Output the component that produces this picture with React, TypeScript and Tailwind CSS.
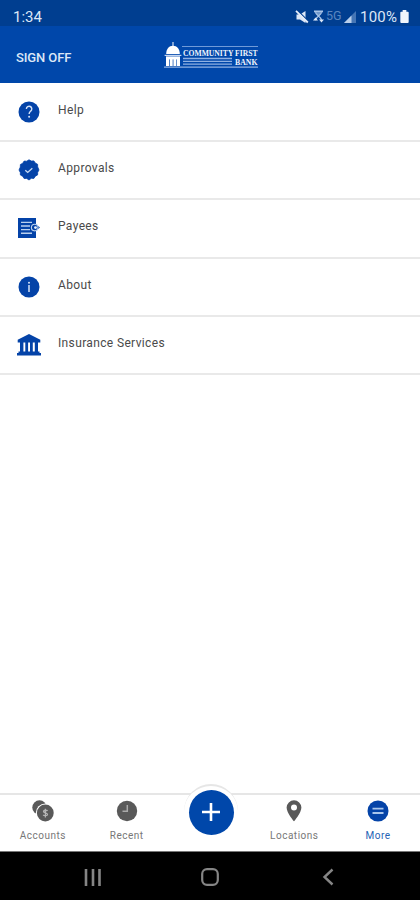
import React from "react";

const HelpIcon = () => (
  <svg width="22" height="22" viewBox="0 0 22 22">
    <circle cx="11" cy="11" r="10.5" fill="#0443a8" />
    <path d="M8.4 8a2.7 2.7 0 1 1 4.3 2.1c-1 .9-1.6 1.5-1.6 2.9" fill="none" stroke="#d5e2f7" strokeWidth="1.4" />
    <circle cx="11.1" cy="15.7" r="1" fill="#d5e2f7" />
  </svg>
);

const ApprovalsIcon = () => (
  <svg width="22" height="22" viewBox="0 0 22 22">
    <path
      d="M11 .8l2.3 1.2 2.6-.1 1.4 2.2 2.3 1.2.1 2.6L21 11l-1.300 2.300-.1 2.600-2.300 1.300-1.400 2.200-2.600-.1L11 21l-2.300-1.600-2.600.1-1.400-2.200-2.300-1.300-.1-2.600L1 11l1.300-2.900.1-2.600 2.300-1.200 1.400-2.200 2.600.1z"
      fill="#0443a8"
      stroke="#0443a8"
      strokeWidth="0.8"
      strokeLinejoin="round"
    />
    <path d="M7.3 11.2l2.4 2.2 4.6-4.2" fill="none" stroke="#c4d8f2" strokeWidth="1.4" />
  </svg>
);

const PayeesIcon = () => (
  <svg width="22" height="22" viewBox="0 0 22 22">
    <path d="M0 1h18v20H0z" fill="#0443a8" />
    <path d="M3 5.4h11M3 9h9M3 12.6h9M3 16.2h11" stroke="#b9d0ee" strokeWidth="1.4" />
    <path d="M16 5.8l6 4.8-6 5z" fill="#0443a8" />
    <circle cx="16.7" cy="10.6" r="3.3" fill="#0443a8" stroke="#b9d0ee" strokeWidth="1.1" />
    <circle cx="17.5" cy="10.6" r="1.4" fill="#e8f0fb" />
  </svg>
);

const AboutIcon = () => (
  <svg width="22" height="22" viewBox="0 0 22 22">
    <circle cx="11" cy="11" r="10.5" fill="#0443a8" />
    <path d="M11 9v7" stroke="#d5e2f7" strokeWidth="1.5" />
    <circle cx="11" cy="6.7" r="1" fill="#d5e2f7" />
  </svg>
);

const InsuranceIcon = () => (
  <svg width="24" height="22" viewBox="0 0 24 22" fill="#0443a8">
    <path d="M12 0l11.3 5.8V8.6H.7V5.8zM3 8.6h3.4V18H3zM8.3 8.6h2.8V18H8.3zM13 8.6h2.8V18H13zM17.8 8.6H21V18h-3.2zM1.5 17.4h21v1.8h-21zM0 19h24v2.6H0z" />
  </svg>
);

const BankLogo = () => (
  <svg width="96" height="28" viewBox="0 0 96 28">
    <g fill="#fff">
      <path d="M8.5 1h1v5h-1z" />
      <path d="M2.2 13C2.200 8 5 4.800 9 4.800s6.800 3.200 6.800 8.200z" />
      <path d="M.6 13.8h16.800v1.200H.6z" fill="#c6d7f1" />
      <path d="M2 15.4h14v3H2z" />
      <path d="M2 16h3v9H2zM5.700 16h3v9h-3zM9.400 16h3v9h-3zM13 16h3v9h-3z" />
    </g>
    <path d="M0 26.2h94" stroke="#8fb1e2" strokeWidth="1.2" />
    <path d="M18 5.5h76" stroke="#6f9ad8" strokeWidth="1" />
    <path d="M19 17.5h49M19 20.3h49M19 23.1h49" stroke="#8fb1e2" strokeWidth="1.3" />
    <text x="19" y="14.6" fill="#f0f5fc" fontSize="7.8" fontWeight="700" fontFamily="Liberation Serif, serif" textLength="74.5" lengthAdjust="spacingAndGlyphs">
      COMMUNITY FIRST
    </text>
    <text x="71" y="23.7" fill="#f0f5fc" fontSize="7.6" fontWeight="700" fontFamily="Liberation Serif, serif" textLength="22.5" lengthAdjust="spacingAndGlyphs">
      BANK
    </text>
  </svg>
);

const StatusBar = () => (
  <div className="flex h-[26px] items-center bg-[#003e90] pt-[7px] pr-[11px] pl-[13px] text-[#dce7f7]">
    <span className="mt-px text-[15px] leading-none">1:34</span>
    <div className="ml-auto flex items-center">
      <svg width="14" height="14" viewBox="0 0 14 14">
        <path d="M1.500 4.500h3.500L10.500 1v12L5 9.500H1.500z" fill="#dce7f7" />
        <path d="M2.200 0l12 12" stroke="#003e90" strokeWidth="1.200" />
        <path d="M1 .8l11.800 11.700" stroke="#e6eefa" strokeWidth="1.800" />
      </svg>
      <svg className="ml-[4px]" width="11" height="13" viewBox="0 0 11 13">
        <path d="M1 .5h9v1.800H1z" fill="#a8c3e6" />
        <path d="M2.200 2h6.600L5.500 6.500z" fill="#6f97cb" />
        <path d="M8.500 2.300c0 3-6 4-6 8M2.500 2.300c0 3 6 4 6 8" fill="none" stroke="#a8c3e6" strokeWidth="1.300" />
        <path d="M0 10.500L2.500 7.500l2.500 3zM6 9.500h5l-2.500 3z" fill="#dce7f7" />
      </svg>
      <span className="ml-[2px] w-[17px] text-[12.500px] leading-none text-[#5a86c0]">5G</span>
      <svg className="ml-px" width="12" height="12" viewBox="0 0 12 12">
        <path d="M0 12L12 0v12z" fill="#4676b5" />
        <path d="M0 12l7.500-7.500V12z" fill="#b9cfeb" />
      </svg>
      <span className="mt-px ml-[4px] w-[40px] text-[15px] leading-none tracking-[0.2px] whitespace-nowrap">100%</span>
      <svg width="9" height="13" viewBox="0 0 9 14">
        <path d="M2.500 0h4v1.800H8a1 1 0 0 1 1 1V13a1 1 0 0 1-1 1H1a1 1 0 0 1-1-1V2.800a1 1 0 0 1 1-1h1.500z" fill="#f0f5fc" />
      </svg>
    </div>
  </div>
);

const menuItems = [
  { label: "Help", icon: <HelpIcon /> },
  { label: "Approvals", icon: <ApprovalsIcon /> },
  { label: "Payees", icon: <PayeesIcon /> },
  { label: "About", icon: <AboutIcon /> },
  { label: "Insurance Services", icon: <InsuranceIcon /> },
];

const AccountsIcon = () => (
  <svg width="24" height="22" viewBox="0 0 24 22">
    <circle cx="8.5" cy="7.5" r="7.2" fill="#595959" />
    <circle cx="14.3" cy="13" r="9.5" fill="#fff" />
    <circle cx="14.3" cy="13" r="8.4" fill="#595959" />
    <path d="M16.5 11c-.5-1-4-1.200-4 .5 0 1.600 4 1.300 4 3 0 1.600-3.600 1.500-4.300.4M14.400 8.800v8.800" fill="none" stroke="#b5b5b5" strokeWidth="1.3" />
  </svg>
);

const RecentIcon = () => (
  <svg width="22" height="22" viewBox="0 0 22 22">
    <circle cx="11" cy="11" r="10.200" fill="#595959" />
    <path d="M11.300 5v6.300H6.500" fill="none" stroke="#aaa" strokeWidth="1.500" />
  </svg>
);

const LocationsIcon = () => (
  <svg width="22" height="22" viewBox="0 0 22 22">
    <path d="M11 .3a7.400 7.400 0 0 0-7.400 7.200C3.600 12.800 11 21.300 11 21.300s7.400-8.500 7.400-13.800A7.400 7.400 0 0 0 11 .3zm0 10.200a3 3 0 1 1 0-6 3 3 0 0 1 0 6z" fill="#595959" />
  </svg>
);

const MoreIcon = () => (
  <svg width="22" height="22" viewBox="0 0 22 22">
    <circle cx="11" cy="11" r="10.5" fill="#0443a8" />
    <path d="M5.500 8.700h11M5.500 13h11" stroke="#a9c6ec" strokeWidth="1.800" />
  </svg>
);

const tabs = [
  { label: "Accounts", icon: <AccountsIcon /> },
  { label: "Recent", icon: <RecentIcon /> },
  { label: "", icon: null },
  { label: "Locations", icon: <LocationsIcon /> },
  { label: "More", icon: <MoreIcon />, active: true },
];

const App: React.FC = () => {
  return (
    <div className="flex h-[900px] w-[420px] flex-col overflow-hidden bg-white font-[Roboto,sans-serif]">
      <StatusBar />

      <header className="grid h-[57px] grid-cols-[164px_1fr] items-center bg-[#0047aa]">
        <button className="mt-[5px] pl-[16px] text-left text-[13px] leading-none font-medium tracking-[-0.1px] text-[#dce7f7]">
          SIGN OFF
        </button>
        <BankLogo />
      </header>

      {/* Menu */}
      <ul className="flex-1 pt-px">
        {menuItems.map((item) => (
          <li key={item.label} className="flex h-[58.2px] items-center border-b-2 border-[#e9e9e9]">
            <span className="flex w-[58px] justify-center">{item.icon}</span>
            <span className="mb-[4px] text-[12px] leading-none tracking-[0.36px] text-[#4a4a4a]">{item.label}</span>
          </li>
        ))}
      </ul>

      {/* Tab bar */}
      <nav className="relative grid h-[58px] grid-cols-5 border-t-2 border-[#e6e6e6] pl-px">
        {tabs.map((tab, i) => (
          <div key={i} className="flex flex-col items-center pt-[5px]">
            {tab.icon}
            <span className={`mt-[9px] text-[10px] leading-none tracking-[0.5px] ${tab.active ? "text-[#2563b5]" : "text-[#777777]"}`}>
              {tab.label}
            </span>
          </div>
        ))}
        <button className="absolute -top-[11px] left-[184px] flex size-[54px] items-center justify-center rounded-full border-t-2 border-[#e6e6e6] bg-white">
          <span className="flex size-[45px] items-center justify-center rounded-full bg-[#0047aa]">
            <svg width="20" height="20" viewBox="0 0 20 20">
              <path d="M10 1v18M1 10h18" stroke="#fff" strokeWidth="2.600" />
            </svg>
          </span>
        </button>
      </nav>

      {/* Android navigation */}
      <div className="flex h-[49px] items-center border-t border-[#777777] bg-black pt-[2px]">
        <svg className="ml-[84px]" width="18" height="17" viewBox="0 0 18 17">
          <path d="M2 0v17M9 0v17M15.500 0v17" stroke="#858585" strokeWidth="2.600" />
        </svg>
        <svg className="ml-[99px]" width="18" height="18" viewBox="0 0 18 18">
          <rect x="1.200" y="1.200" width="15.600" height="15.600" rx="4.800" fill="none" stroke="#858585" strokeWidth="2.200" />
        </svg>
        <svg className="ml-[103px]" width="12" height="18" viewBox="0 0 12 18">
          <path d="M10.500 1.500L2.500 9l8 7.500" fill="none" stroke="#858585" strokeWidth="2.400" />
        </svg>
      </div>
    </div>
  );
};

export default App;
